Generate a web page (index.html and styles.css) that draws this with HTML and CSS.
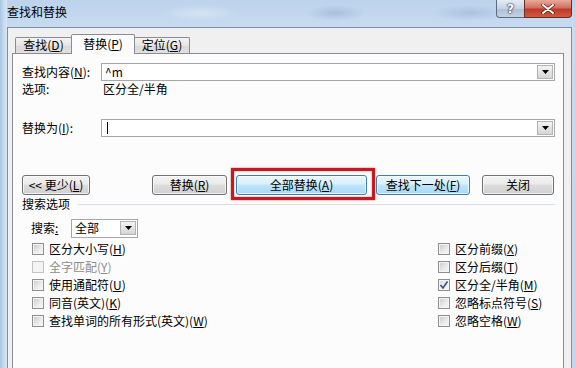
FILE: index.html
```html
<!DOCTYPE html>
<html>
<head>
<meta charset="utf-8">
<link rel="stylesheet" href="styles.css">
</head>
<body>
<div class="win">
  <div class="titlebar">
    <span class="title">查找和替换</span>
    <div class="caps">
      <div class="cap help">?</div>
      <div class="cap close">
        <svg width="14" height="10" viewBox="0 0 14 10"><path d="M2 1 L12 9 M12 1 L2 9" stroke="#5a1a14" stroke-width="3.4" stroke-linecap="round"/><path d="M2 1 L12 9 M12 1 L2 9" stroke="#fff" stroke-width="2" stroke-linecap="round"/></svg>
      </div>
    </div>
  </div>
  <div class="dlg">
    <div class="tabs">
      <div class="tab t1">查找(<u>D</u>)</div>
      <div class="tab t2 sel">替换(<u>P</u>)</div>
      <div class="tab t3">定位(<u>G</u>)</div>
    </div>
    <div class="panel">
      <div class="row r1">
        <span class="lbl">查找内容(<u>N</u>):</span>
        <div class="combo"><span class="val">^m</span><span class="dd"><svg width="7" height="4" viewBox="0 0 7 4"><path d="M0 0H7L3.5 4Z" fill="#000"/></svg></span></div>
      </div>
      <div class="row r2">
        <span class="lbl">选项:</span>
        <span class="opt">区分全/半角</span>
      </div>
      <div class="row r3">
        <span class="lbl">替换为(<u>I</u>):</span>
        <div class="combo"><span class="caret"></span><span class="dd"><svg width="7" height="4" viewBox="0 0 7 4"><path d="M0 0H7L3.5 4Z" fill="#000"/></svg></span></div>
      </div>
      <div class="btns">
        <div class="btn b-less">&lt;&lt; 更少(<u>L</u>)</div>
        <div class="btn b-rep">替换(<u>R</u>)</div>
        <div class="mark"><div class="btn b-all hot">全部替换(<u>A</u>)</div></div>
        <div class="btn b-next hot">查找下一处(<u>F</u>)</div>
        <div class="btn b-close">关闭</div>
      </div>
      <div class="grp"><span>搜索选项</span><span class="rule"></span></div>
      <div class="srch">
        <span class="slbl">搜索<u>:</u></span>
        <div class="select"><span class="val">全部</span><span class="dd"><svg width="7" height="4" viewBox="0 0 7 4"><path d="M0 0H7L3.5 4Z" fill="#000"/></svg></span></div>
      </div>
      <div class="checks">
        <div class="col">
          <div class="ck"><span class="box"></span>区分大小写(<u>H</u>)</div>
          <div class="ck dis"><span class="box"></span>全字匹配(<u>Y</u>)</div>
          <div class="ck"><span class="box"></span>使用通配符(<u>U</u>)</div>
          <div class="ck"><span class="box"></span>同音(英文)(<u>K</u>)</div>
          <div class="ck"><span class="box"></span>查找单词的所有形式(英文)(<u>W</u>)</div>
        </div>
        <div class="col">
          <div class="ck"><span class="box"></span>区分前缀(<u>X</u>)</div>
          <div class="ck"><span class="box"></span>区分后缀(<u>T</u>)</div>
          <div class="ck"><span class="box on"><svg width="10" height="10" viewBox="0 0 10 10"><path d="M1.5 5 L4 8 L8.5 1.5" fill="none" stroke="#3d4f7a" stroke-width="1.6"/></svg></span>区分全/半角(<u>M</u>)</div>
          <div class="ck"><span class="box"></span>忽略标点符号(<u>S</u>)</div>
          <div class="ck"><span class="box"></span>忽略空格(<u>W</u>)</div>
        </div>
      </div>
    </div>
  </div>
</div>
</body>
</html>
```
FILE: styles.css
```css
* { box-sizing: border-box; margin: 0; padding: 0; }
html, body { width: 575px; height: 368px; overflow: hidden; }
body {
  font-family: "Noto Sans CJK SC", "Liberation Sans", sans-serif;
  font-size: 12px;
  color: #000;
  background: #c3d8ee;
}
u { text-decoration: underline; text-underline-offset: 1px; }

.win {
  width: 575px;
  height: 368px;
  display: flex;
  flex-direction: column;
  background:
    linear-gradient(90deg, #a9c4e2 0, #c8dcf0 4px, #d6e5f4 7px, transparent 7px),
    linear-gradient(#bcd3eb, #c9dcf0 30px, #c3d8ee);
}

.titlebar {
  height: 27px;
  display: flex;
  justify-content: space-between;
  align-items: flex-start;
  background:
    radial-gradient(ellipse 30px 8px at 335px 13px, rgba(120,150,190,0.35), transparent),
    radial-gradient(ellipse 40px 8px at 470px 13px, rgba(120,150,190,0.3), transparent),
    radial-gradient(ellipse 40px 8px at 200px 13px, rgba(255,255,255,0.3), transparent);
}
.title {
  padding: 4px 0 0 7px;
  line-height: 16px;
  font-size: 12px;
  color: #000;
}
.caps { display: flex; margin-right: 3px; }
.cap {
  height: 18px;
  display: flex;
  align-items: center;
  justify-content: center;
  border: 1px solid #5b6b80;
  border-top: none;
}
.help {
  width: 28px;
  border-radius: 0 0 0 4px;
  background: linear-gradient(#e4ecf5, #c6d3e2 50%, #aebfd3 51%, #c3d2e3);
  color: #fff;
  font-family: "DejaVu Sans", sans-serif;
  font-weight: bold;
  font-size: 13px;
  text-shadow: 0 0 1px #334, 0 0 1px #334, 0 0 2px #334;
  border-right: none;
}
.close {
  width: 48px;
  border-radius: 0 0 4px 0;
  border-color: #6b2a22;
  background: linear-gradient(#e9a99b, #d2705f 45%, #c0392a 55%, #d15a40);
}

.dlg {
  flex: 1;
  margin: 0 3px 0 7px;
  border: 1px solid #7c8ea4;
  border-bottom: none;
  background: #f0f0f0;
  display: flex;
  flex-direction: column;
}
.tabs {
  height: 25px;
  padding-left: 7px;
  display: flex;
  align-items: flex-end;
  position: relative;
  z-index: 1;
}
.tab {
  height: 16px;
  border: 1px solid #898c95;
  border-bottom: none;
  border-radius: 2px 2px 0 0;
  background: linear-gradient(#f3f3f3, #e6e6e6 50%, #d9d9d9 51%, #e0e0e0);
  text-align: center;
  line-height: 14px;
  margin-bottom: 0;
}
.t1 { width: 57px; }
.t2 { width: 64px; margin-left: -1px; }
.t3 { width: 56px; margin-left: -1px; }
.tab.sel {
  height: 20px;
  background: #fcfcfc;
  margin-bottom: -1px;
  line-height: 18px;
  position: relative;
  z-index: 2;
}

.panel {
  flex: 1;
  margin: 0 7px 0 4px;
  border: 1px solid #898c95;
  border-bottom: none;
  background: #fcfcfc;
  padding: 9px 8px 0 9px;
  display: flex;
  flex-direction: column;
}
.row { display: flex; align-items: center; }
.lbl { width: 79px; flex: none; line-height: 14px; }
.r1, .r3 { height: 18px; }
.r2 { height: 14px; margin-top: 1px; }
.r3 { margin-top: 23px; }
.opt { padding-left: 2px; line-height: 14px; }

.combo {
  flex: 1;
  height: 18px;
  border: 1px solid #a5a7ad;
  background: #fff;
  display: flex;
  align-items: center;
  padding-left: 3px;
}
.val { flex: 1; line-height: 14px; }
.caret { width: 1px; height: 12px; background: #000; margin-left: 2px; flex: none; margin-right: auto; }
.dd {
  width: 16px;
  height: 14px;
  margin-right: 1px;
  border: 1px solid #b3b3b3;
  background: linear-gradient(#f4f4f4, #e4e4e4 50%, #d6d6d6);
  display: flex;
  align-items: center;
  justify-content: center;
  flex: none;
}

.btns {
  margin-top: 38px;
  height: 20px;
  display: flex;
}
.btn {
  height: 20px;
  border: 1px solid #707070;
  border-radius: 3px;
  background: linear-gradient(#f2f2f2, #ebebeb 45%, #dddddd 50%, #cfcfcf);
  box-shadow: inset 0 0 0 1px rgba(255,255,255,0.7);
  text-align: center;
  line-height: 18px;
}
.btn.hot {
  border-color: #3c7fb1;
  background: linear-gradient(#eaf6fd, #d9f0fc 45%, #bee6fd 50%, #a7d9f5);
}
.b-less { width: 68px; }
.b-rep { width: 75px; margin-left: 62px; }
.mark { margin-left: 9px; position: relative; }
.b-all { width: 131px; }
.mark::after {
  content: "";
  position: absolute;
  left: -5px; right: -8px; top: -7px; bottom: -5px;
  border: 3px solid #c41a22;
  box-shadow: 0 0 2px rgba(190,20,30,0.6), inset 0 0 2px rgba(190,20,30,0.6);
}
.b-next { width: 94px; margin-left: 9px; }
.b-close { width: 72px; margin-left: 12px; }

.grp {
  margin-top: 2px;
  height: 14px;
  display: flex;
  align-items: center;
  line-height: 14px;
}
.rule { flex: 1; height: 1px; background: #d5dfe5; margin-left: 8px; }

.srch {
  margin-top: 7px;
  height: 20px;
  padding-left: 9px;
  display: flex;
  align-items: center;
}
.slbl { width: 40px; line-height: 14px; }
.select {
  width: 67px;
  height: 19px;
  border: 1px solid #a5a7ad;
  background: #fff;
  display: flex;
  align-items: center;
  padding-left: 3px;
}

.checks {
  margin-top: 2px;
  padding-left: 9px;
  display: grid;
  grid-template-columns: 406px 1fr;
}
.col { display: flex; flex-direction: column; }
.ck {
  height: 18px;
  display: flex;
  align-items: center;
  line-height: 14px;
}
.box {
  width: 12px;
  height: 12px;
  margin: 0 5px 0 1px;
  border: 1px solid #8e8f8f;
  background: linear-gradient(135deg, #c9c9c9, #ececec 60%, #f6f6f6);
  box-shadow: inset 0 0 0 1px #f4f4f4;
  display: flex;
  align-items: center;
  justify-content: center;
  flex: none;
}
.box.on { background: linear-gradient(135deg, #d6dbe6, #eef0f5 60%, #f6f6f6); }
.ck.dis { color: #8d8d8d; }
.ck.dis .box { border-color: #c4c4c4; background: #f4f4f4; box-shadow: none; }
```
